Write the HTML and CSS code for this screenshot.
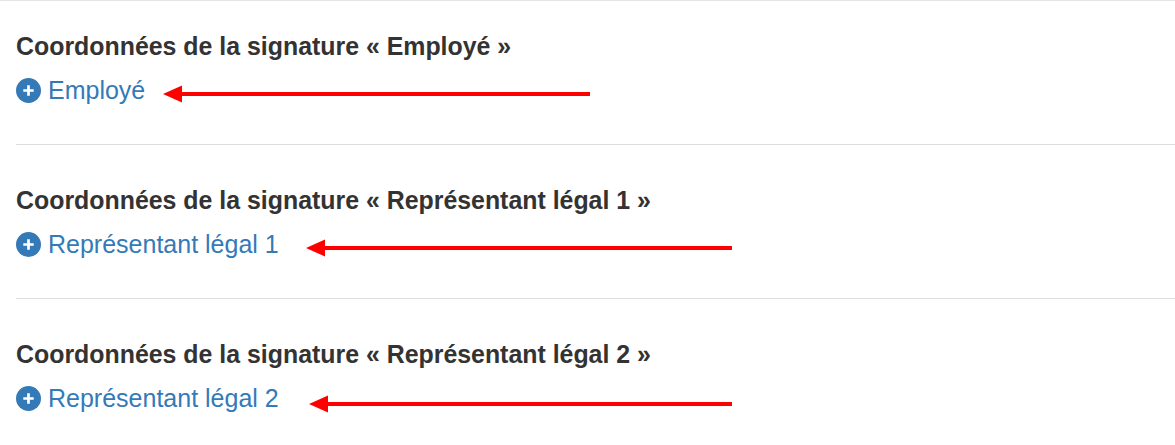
FILE: index.html
```html
<!DOCTYPE html>
<html lang="fr">
<head>
<meta charset="utf-8">
<title>Coordonnées</title>
<link rel="stylesheet" href="styles.css">
</head>
<body>
<main class="page">
  <section class="block">
    <h2 class="title">Coordonnées de la signature « Employé »</h2>
    <a class="add" href="#"><svg class="plus" viewBox="0 0 24 24"><circle cx="12" cy="12" r="12" fill="#337ab7"/><path d="M12 7v10M7 12h10" stroke="#fff" stroke-width="2.6" fill="none"/></svg>Employé</a>
    <svg class="arrow arrow-a" viewBox="0 0 428 18"><path d="M0 9 19 0.5V7H427V11H19V17.5Z" fill="#f00"/></svg>
  </section>
  <section class="block">
    <h2 class="title">Coordonnées de la signature « Représentant légal 1 »</h2>
    <a class="add" href="#"><svg class="plus" viewBox="0 0 24 24"><circle cx="12" cy="12" r="12" fill="#337ab7"/><path d="M12 7v10M7 12h10" stroke="#fff" stroke-width="2.6" fill="none"/></svg>Représentant légal 1</a>
    <svg class="arrow arrow-b" viewBox="0 0 427 18"><path d="M0 9 19 0.5V7H426V11H19V17.5Z" fill="#f00"/></svg>
  </section>
  <section class="block">
    <h2 class="title">Coordonnées de la signature « Représentant légal 2 »</h2>
    <a class="add" href="#"><svg class="plus" viewBox="0 0 24 24"><circle cx="12" cy="12" r="12" fill="#337ab7"/><path d="M12 7v10M7 12h10" stroke="#fff" stroke-width="2.6" fill="none"/></svg>Représentant légal 2</a>
    <svg class="arrow arrow-c" viewBox="0 0 424 18"><path d="M0 9 19 0.5V7H423V11H19V17.5Z" fill="#f00"/></svg>
  </section>
</main>
</body>
</html>
```
FILE: styles.css
```css
html, body {
  margin: 0;
  padding: 0;
  background: #fff;
}
body {
  font-family: "Liberation Sans", Arial, sans-serif;
  overflow: hidden;
}
.page {
  border-top: 1px solid #e6e6e6;
  padding-left: 16px;
}
.block {
  position: relative;
  height: 112px;
  padding-top: 31px;
  margin-bottom: 10px;
  border-bottom: 1px solid #ddd;
}
.block:last-child {
  border-bottom: 0;
  margin-bottom: 0;
}
.title {
  margin: 0;
  font-size: 24.9px;
  line-height: 28px;
  font-weight: 700;
  color: #333;
}
.add {
  display: flex;
  align-items: center;
  gap: 7px;
  margin-top: 15px;
  font-size: 25px;
  line-height: 30px;
  color: #337ab7;
  text-decoration: none;
}
.plus {
  width: 25px;
  height: 25px;
  flex: none;
}
.arrow {
  position: absolute;
  height: 18px;
}
.arrow-a {
  left: 147px;
  top: 84px;
  width: 428px;
}
.arrow-b {
  left: 290px;
  top: 84px;
  width: 427px;
}
.arrow-c {
  left: 293px;
  top: 86px;
  width: 424px;
}
```
